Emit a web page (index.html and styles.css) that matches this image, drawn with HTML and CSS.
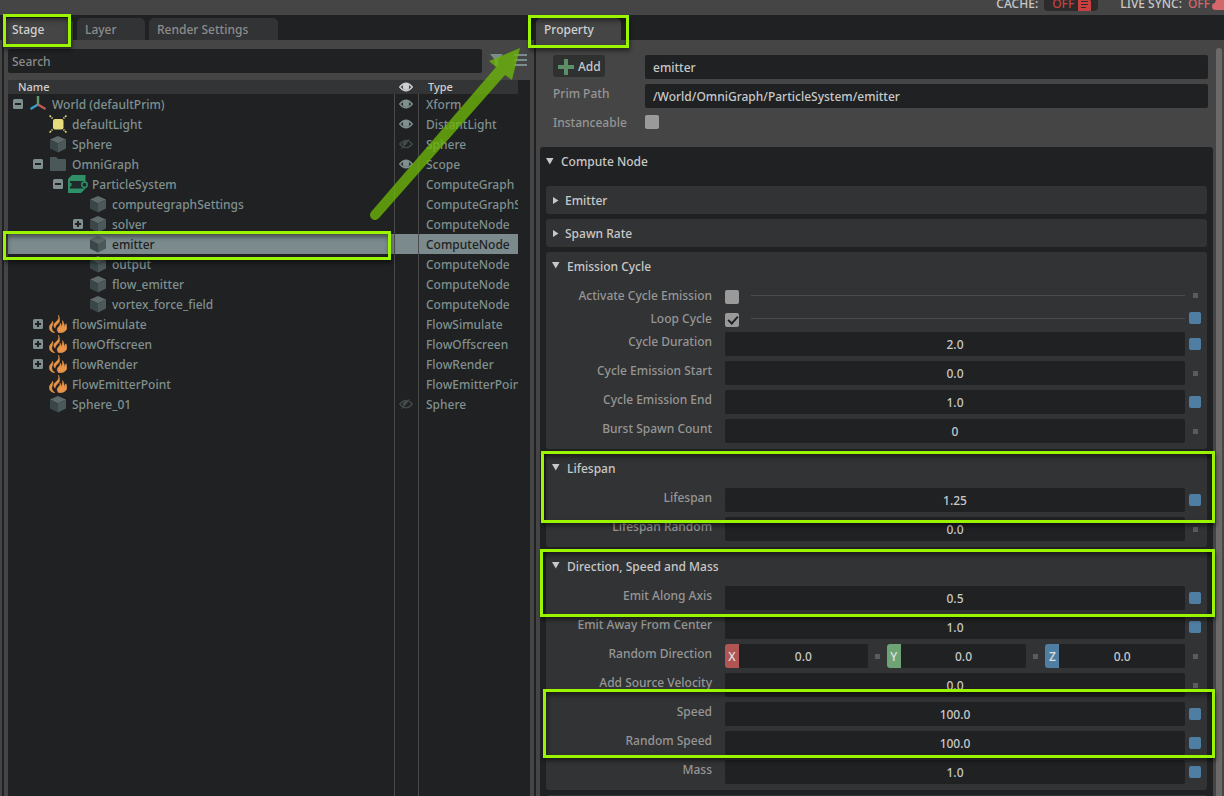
FILE: index.html
```html
<!DOCTYPE html>
<html lang="en">
<head>
<meta charset="utf-8">
<title>Stage and Property</title>
<link rel="stylesheet" href="styles.css">
</head>
<body>
<svg class="defs" aria-hidden="true">
  <symbol id="minus" viewBox="0 0 10 10"><rect width="10" height="10" rx="1.5" fill="#7f8f90"/><rect x="2" y="4" width="6" height="2" fill="#1f2123"/></symbol>
  <symbol id="plus" viewBox="0 0 10 10"><rect width="10" height="10" rx="1.5" fill="#7f8f90"/><path d="M2 4h2V2h2v2h2v2H6v2H4V6H2z" fill="#1f2123"/></symbol>
  <symbol id="axes" viewBox="0 0 18 18"><path d="M9 10V1" stroke="#5f9a68" stroke-width="2.400"/><path d="M9 9.500 1.500 14" stroke="#3aa0c8" stroke-width="2.400"/><path d="M9 9.500l7.500 4.500" stroke="#b85c5c" stroke-width="2.400"/></symbol>
  <symbol id="light" viewBox="0 0 18 18"><rect x="4" y="4" width="10.500" height="10.500" rx="2" fill="#e6dc7c"/><path d="M.5.5l3 3M17.500.5l-3 3M.5 17.500l3-3M17.500 17.500l-3-3" stroke="#e6dc7c" stroke-width="1.500" stroke-dasharray="2.200 .8"/></symbol>
  <symbol id="cube" viewBox="0 0 18 18"><path d="M9 1l8 3.500L9 8.500 1 4.500z" fill="#5f6a6b"/><path d="M1 4.500 9 8.500v9L1 13.500z" fill="#3a4648"/><path d="M17 4.500 9 8.500v9l8-4z" fill="#4c595b"/></symbol>
  <symbol id="folder" viewBox="0 0 18 18"><path d="M1 3q0-1 1-1h5l2 2h7q1 0 1 1v10q0 1-1 1H2q-1 0-1-1z" fill="#4b585a"/></symbol>
  <symbol id="graph" viewBox="0 0 20 18"><path d="M4 0h13.500v6M4 0 0 4v14h13l4.500-4.500V6z" fill="#2f9068"/><path d="M2 6h14v7.500H2v-2.200h1.500V8H2z" fill="#1f2b2b"/><circle cx="16.500" cy="9.700" r="2.700" fill="#1f2b2b" stroke="#2f9068" stroke-width="1.500"/></symbol>
  <symbol id="fire" viewBox="0 0 18 18"><path d="M9.500 0c.8 3.200-.2 5-2.400 6.800C4.600 8.800 4 10.800 6 13.200 6.400 10.500 8.200 9.600 9.800 7.600 11 6 10.800 3.500 9.500 0zM3.500 6C4 8-.2 9.500.3 13.300.7 16 3 17.600 6 17.800 3.200 15.600 2.400 14 3 11.600 3.400 10 4.600 8 3.500 6zM11 8c.6 2-.6 3-2 4.500-1.300 1.500-1 3.500.6 5.300 3.200.2 6.600-.8 8-3.600.8-2-.4-3.400-.3-5.400-1.200.6-1.700 1.600-1.500 3C14.800 11 15.600 8.500 13.400 5.500c.4 2.600-.2 5-1.600 7.200C12.300 11 12.200 9.400 11 8z" fill="#e8954a" stroke="#e8954a" stroke-width=".5"/></symbol>
  <symbol id="eye" viewBox="0 0 14 10"><path d="M.7 5Q7-2.500 13.300 5 7 12.500.7 5z" fill="none" stroke="currentColor" stroke-width="1.300"/><circle cx="7" cy="4.800" r="3.200" fill="currentColor"/></symbol>
  <symbol id="eye-off" viewBox="0 0 14 10"><path d="M.7 5Q7-2.500 13.300 5 7 12.500.7 5z" fill="none" stroke="currentColor" stroke-width="1.200"/><path d="M4 4q2-2.500 4.500-1.500L5.500 7Q4 6 4 4zM2.500 10 10.500 0" fill="currentColor" stroke="currentColor"/></symbol>
  <symbol id="down" viewBox="0 0 8 7"><path d="M0 0h7.500L3.800 6.500z" fill="currentColor"/></symbol>
  <symbol id="right" viewBox="0 0 8 7"><path d="M1 0l5.500 3.500L1 7z" fill="currentColor"/></symbol>
</svg>

<header class="status">
  <span>CACHE:</span>
  <button class="cache" type="button">OFF <svg class="doc" viewBox="0 0 13 14"><path d="M0 0h9l4 4v10H0z" fill="#c8403f"/><path d="M3 4.500h7M3 7.500h7M3 10.500h5" stroke="#2b2b2b"/></svg></button>
  <span>LIVE SYNC:</span>
  <span class="sync-off">OFF</span>
  <svg class="cloud" viewBox="0 0 12 14"><path d="M4 13q-4 0-4-3.500Q0 6 3 6 4 0 10 0h2v13z" fill="#d4676b"/></svg>
</header>

<main class="workspace">
  <section class="stage">
    <nav class="tabs">
      <button class="tab tab-stage active" type="button">Stage</button>
      <button class="tab tab-layer" type="button">Layer</button>
      <button class="tab tab-render" type="button">Render Settings</button>
    </nav>
    <div class="stage-body">
      <div class="searchbar">
        <input class="search" type="text" placeholder="Search" aria-label="Search">
        <button class="tool" type="button" aria-label="Filter"><svg width="13" height="14" viewBox="0 0 13 14"><path d="M0 0h13L8 6v6H5V6z" fill="#7c8b8c"/></svg></button>
        <button class="tool" type="button" aria-label="Options"><svg width="13" height="14" viewBox="0 0 13 14"><path d="M0 1h13M0 6h13M0 11h13" stroke="#7c8b8c" stroke-width="2"/></svg></button>
      </div>
      <div class="tree-pane">
        <table class="tree">
          <thead><tr><th class="name">Name</th><th class="vis"><svg class="eye"><use href="#eye"/></svg></th><th class="type">Type</th></tr></thead>
          <tbody>
            <tr><td><div class="node d0"><svg class="tog"><use href="#minus"/></svg><svg class="ico"><use href="#axes"/></svg>World (defaultPrim)</div></td><td class="vis"><svg class="eye"><use href="#eye"/></svg></td><td class="type">Xform</td></tr>
            <tr><td><div class="node d1"><i class="tog"></i><svg class="ico"><use href="#light"/></svg>defaultLight</div></td><td class="vis"><svg class="eye"><use href="#eye"/></svg></td><td class="type">DistantLight</td></tr>
            <tr><td><div class="node d1"><i class="tog"></i><svg class="ico"><use href="#cube"/></svg>Sphere</div></td><td class="vis off"><svg class="eye"><use href="#eye-off"/></svg></td><td class="type">Sphere</td></tr>
            <tr><td><div class="node d1"><svg class="tog"><use href="#minus"/></svg><svg class="ico"><use href="#folder"/></svg>OmniGraph</div></td><td class="vis"><svg class="eye"><use href="#eye"/></svg></td><td class="type">Scope</td></tr>
            <tr><td><div class="node d2"><svg class="tog"><use href="#minus"/></svg><svg class="ico wide"><use href="#graph"/></svg>ParticleSystem</div></td><td class="vis"></td><td class="type">ComputeGraph</td></tr>
            <tr><td><div class="node d3"><i class="tog"></i><svg class="ico"><use href="#cube"/></svg>computegraphSettings</div></td><td class="vis"></td><td class="type">ComputeGraphSettings</td></tr>
            <tr><td><div class="node d3"><svg class="tog"><use href="#plus"/></svg><svg class="ico"><use href="#cube"/></svg>solver</div></td><td class="vis"></td><td class="type">ComputeNode</td></tr>
            <tr class="selected"><td><div class="node d3"><i class="tog"></i><svg class="ico"><use href="#cube"/></svg>emitter</div></td><td class="vis"></td><td class="type">ComputeNode</td></tr>
            <tr><td><div class="node d3"><i class="tog"></i><svg class="ico"><use href="#cube"/></svg>output</div></td><td class="vis"></td><td class="type">ComputeNode</td></tr>
            <tr><td><div class="node d3"><i class="tog"></i><svg class="ico"><use href="#cube"/></svg>flow_emitter</div></td><td class="vis"></td><td class="type">ComputeNode</td></tr>
            <tr><td><div class="node d3"><i class="tog"></i><svg class="ico"><use href="#cube"/></svg>vortex_force_field</div></td><td class="vis"></td><td class="type">ComputeNode</td></tr>
            <tr><td><div class="node d1"><svg class="tog"><use href="#plus"/></svg><svg class="ico"><use href="#fire"/></svg>flowSimulate</div></td><td class="vis"></td><td class="type">FlowSimulate</td></tr>
            <tr><td><div class="node d1"><svg class="tog"><use href="#plus"/></svg><svg class="ico"><use href="#fire"/></svg>flowOffscreen</div></td><td class="vis"></td><td class="type">FlowOffscreen</td></tr>
            <tr><td><div class="node d1"><svg class="tog"><use href="#plus"/></svg><svg class="ico"><use href="#fire"/></svg>flowRender</div></td><td class="vis"></td><td class="type">FlowRender</td></tr>
            <tr><td><div class="node d1"><i class="tog"></i><svg class="ico"><use href="#fire"/></svg>FlowEmitterPoint</div></td><td class="vis"></td><td class="type">FlowEmitterPoint</td></tr>
            <tr><td><div class="node d1"><i class="tog"></i><svg class="ico"><use href="#cube"/></svg>Sphere_01</div></td><td class="vis off"><svg class="eye"><use href="#eye-off"/></svg></td><td class="type">Sphere</td></tr>
          </tbody>
        </table>
      </div>
    </div>
  </section>

  <section class="property">
    <nav class="tabs"><button class="tab tab-property active" type="button">Property</button></nav>
    <div class="property-body">
      <div class="property-content">
        <div class="prim">
          <button class="add" type="button"><svg width="16" height="16" viewBox="0 0 16 16"><path d="M6 0h4v6h6v4h-6v6H6v-6H0V6h6z" fill="#5c8f68"/></svg>Add</button>
          <input class="field" type="text" value="emitter" aria-label="Prim name">
          <label for="path">Prim Path</label>
          <input class="field" id="path" type="text" value="/World/OmniGraph/ParticleSystem/emitter">
          <label for="inst">Instanceable</label>
          <input class="check" id="inst" type="checkbox">
        </div>

        <div class="frame">
          <button class="frame-title" type="button"><svg class="arrow"><use href="#down"/></svg>Compute Node</button>
          <section class="group closed"><button class="title" type="button"><svg class="arrow"><use href="#right"/></svg>Emitter</button></section>
          <section class="group closed"><button class="title" type="button"><svg class="arrow"><use href="#right"/></svg>Spawn Rate</button></section>

          <section class="group">
            <button class="title" type="button"><svg class="arrow"><use href="#down"/></svg>Emission Cycle</button>
            <div class="row"><label for="ace">Activate Cycle Emission</label><div class="toggle"><input class="check" id="ace" type="checkbox"><hr></div><i class="mark"></i></div>
            <div class="row"><label for="lc">Loop Cycle</label><div class="toggle"><input class="check" id="lc" type="checkbox" checked><hr></div><i class="mark set"></i></div>
            <div class="row"><label for="cd">Cycle Duration</label><input class="field num" id="cd" type="text" value="2.0"><i class="mark set"></i></div>
            <div class="row"><label for="cs">Cycle Emission Start</label><input class="field num" id="cs" type="text" value="0.0"><i class="mark"></i></div>
            <div class="row"><label for="ce">Cycle Emission End</label><input class="field num" id="ce" type="text" value="1.0"><i class="mark set"></i></div>
            <div class="row"><label for="bs">Burst Spawn Count</label><input class="field num" id="bs" type="text" value="0"><i class="mark"></i></div>
          </section>

          <section class="group">
            <button class="title" type="button"><svg class="arrow"><use href="#down"/></svg>Lifespan</button>
            <div class="row"><label for="ls">Lifespan</label><input class="field num" id="ls" type="text" value="1.25"><i class="mark set"></i></div>
            <div class="row"><label for="lr">Lifespan Random</label><input class="field num" id="lr" type="text" value="0.0"><i class="mark"></i></div>
          </section>

          <section class="group">
            <button class="title" type="button"><svg class="arrow"><use href="#down"/></svg>Direction, Speed and Mass</button>
            <div class="row"><label for="ea">Emit Along Axis</label><input class="field num" id="ea" type="text" value="0.5"><i class="mark set"></i></div>
            <div class="row"><label for="ec">Emit Away From Center</label><input class="field num" id="ec" type="text" value="1.0"><i class="mark set"></i></div>
            <div class="row"><label for="rx">Random Direction</label>
              <div class="vector">
                <div class="axis"><label class="x" for="rx">X</label><input class="field num" id="rx" type="text" value="0.0"></div>
                <i class="mark"></i>
                <div class="axis"><label class="y" for="ry">Y</label><input class="field num" id="ry" type="text" value="0.0"></div>
                <i class="mark"></i>
                <div class="axis"><label class="z" for="rz">Z</label><input class="field num" id="rz" type="text" value="0.0"></div>
              </div><i class="mark"></i></div>
            <div class="row"><label for="sv">Add Source Velocity</label><input class="field num" id="sv" type="text" value="0.0"><i class="mark"></i></div>
            <div class="row"><label for="sp">Speed</label><input class="field num" id="sp" type="text" value="100.0"><i class="mark set"></i></div>
            <div class="row"><label for="rs">Random Speed</label><input class="field num" id="rs" type="text" value="100.0"><i class="mark set"></i></div>
            <div class="row"><label for="ms">Mass</label><input class="field num" id="ms" type="text" value="1.0"><i class="mark set"></i></div>
          </section>
          <section class="group closed"></section>
        </div>
      </div>
      <div class="scrollbar"></div>
    </div>
  </section>
</main>

<div class="callout c-stage"></div>
<div class="callout c-property"></div>
<div class="callout c-emitter"></div>
<div class="callout c-lifespan"></div>
<div class="callout c-direction"></div>
<div class="callout c-speed"></div>
<svg class="pointer" width="160" height="180" viewBox="0 0 160 180"><path d="M151 8 120 21l7 6L2 172a5 5 0 0 0 8 6L136 35l7 5z" fill="#6cb40a" fill-opacity=".8"/></svg>
</body>
</html>
```
FILE: styles.css
```css
* { box-sizing: border-box; }

body {
  margin: 0;
  height: 100vh;
  overflow: hidden;
  display: flex;
  flex-direction: column;
  background: #454545;
  color: #c8c8c8;
  font: 500 12px/18px "Noto Sans", "Open Sans", sans-serif;
}

button, input { font: inherit; color: inherit; border: 0; margin: 0; padding: 0; }
button { background: none; text-align: left; }
.defs { position: absolute; width: 0; height: 0; }
svg { display: block; flex: none; }

.status {
  height: 15px;
  flex: none;
  display: flex;
  align-items: flex-end;
  justify-content: flex-end;
  gap: 6px;
  padding-bottom: 4px;
  overflow: hidden;
}
.status > span { line-height: 14px; }
.cache {
  display: flex;
  align-items: flex-end;
  gap: 4px;
  height: 24px;
  padding: 0 7px 0 8px;
  margin-right: 16px;
  border-radius: 4px;
  background: #2b2b2b;
  color: #c8403f;
  line-height: 14px;
}
.doc { width: 13px; height: 14px; }
.sync-off { color: #d4676b; }
.cloud { width: 12px; height: 14px; margin-left: -4px; }

.workspace { flex: 1; min-height: 0; display: flex; }

.tabs { display: flex; gap: 4px; height: 25px; padding-top: 3px; background: #1f2123; flex: none; }
.tab { padding: 2px 0 0 8px; background: #323334; color: #8c8c8c; border-radius: 5px 5px 0 0; }
.tab.active { background: #454545; color: #d0d0d0; }
.tab-stage { width: 69px; padding-left: 8px; }
.tab-layer { width: 68px; }
.tab-render { width: 129px; }
.tab-property { width: 85px; }

.stage { width: 534px; flex: none; display: flex; flex-direction: column; }
.stage .tabs { padding-left: 4px; }
.stage-body {
  flex: 1;
  min-height: 0;
  display: flex;
  flex-direction: column;
  gap: 7px;
  margin-left: 2px;
  padding: 9px 4px 0;
  border-left: 2px solid #1f2123;
}
.searchbar { display: flex; height: 24px; gap: 11px; align-items: center; padding-right: 3px; }
.search { flex: 1; height: 24px; padding: 0 4px; background: #1f2123; border-radius: 2px; }
.search::placeholder { color: #8c8c8c; opacity: 1; }
.tool { width: 13px; }
.tool:first-of-type { margin-left: -3px; }

.tree-pane {
  flex: 1;
  min-height: 0;
  padding-right: 12px;
  overflow: hidden;
  background:
    linear-gradient(#4a4a4a, #4a4a4a) right 135px top / 1px 100% no-repeat,
    linear-gradient(#4a4a4a, #4a4a4a) right 111px top / 1px 100% no-repeat,
    #1f2123;
}
.tree { width: 100%; table-layout: fixed; border-collapse: separate; border-spacing: 0; color: #80908f; }
.tree th, .tree td { padding: 0; height: 20px; line-height: 18px; overflow: hidden; white-space: nowrap; }
.tree th { height: 14px; line-height: 14px; font-size: 11px; font-weight: 500; text-align: left; background: #333435; color: #d0d0d0; }
.tree th.name { padding-left: 10px; }
.tree .vis { width: 24px; padding-left: 4px; }
.tree td.vis { border-left: 1px solid #4a4a4a; }
.tree .type { width: 100px; padding-left: 7px; }
.tree td.type { border-left: 1px solid #4a4a4a; padding-top: 2px; }
.tree th.type { padding-left: 10px; }
.tree td.off { color: #444b4c; }
.eye { width: 14px; height: 10px; }
th .eye { margin-left: 1px; }
.tree .selected { background: #7b8b8d; color: #1f2123; }
.node { display: flex; align-items: center; height: 20px; padding: 2px 0 0 5px; }
.d1 { padding-left: 25px; }
.d2 { padding-left: 45px; }
.d3 { padding-left: 65px; }
.tog { width: 10px; height: 10px; margin: 0 6px 2px 0; }
.ico { width: 18px; height: 18px; margin: 0 5px 2px 0; }
.ico.wide { width: 20px; margin: 0 4px 2px -1px; }

.property { flex: 1; min-width: 0; display: flex; flex-direction: column; border-left: 2px solid #1f2123; }
.property-body { flex: 1; min-height: 0; display: flex; gap: 3px; padding: 8px 2px 0 4px; }
.property-content { flex: 1; min-width: 0; }
.scrollbar { width: 6px; background: #6a6a6a; border-radius: 3px 3px 0 0; }

.prim {
  display: grid;
  grid-template-columns: 92px 1fr;
  grid-template-rows: 24px 24px 18px;
  gap: 5px 0;
  padding: 7px 5px 16px 13px;
}
.prim label { color: #969696; line-height: 20px; }
.prim .check { margin-top: 2px; }
.add {
  display: flex;
  align-items: center;
  gap: 4px;
  width: 52px;
  height: 22px;
  padding: 1px 0 0 5px;
  background: #2f3030;
  border-radius: 3px;
}
.field { width: 100%; min-width: 0; height: 24px; padding: 1px 8px 0; background: #1f2123; border-radius: 2px; }
.num { text-align: center; padding: 0; }
.check { appearance: none; width: 14px; height: 14px; flex: none; background: #9a9a9a; border-radius: 2px; }
.check:checked::before {
  content: "";
  display: block;
  width: 8px;
  height: 4px;
  margin: 3px;
  border: solid #1f2123;
  border-width: 0 0 2px 2px;
  transform: rotate(-48deg);
}

.frame { display: flex; flex-direction: column; gap: 5px; padding: 0 6px; background: #1f2123; border-radius: 3px; }
.frame-title, .title { display: flex; align-items: center; width: 100%; }
.frame-title { height: 30px; margin-bottom: 4px; }
.arrow { width: 8px; height: 7px; margin: 0 7px 2px 0; }
.closed .arrow { margin-right: 5px; }
.group { display: flex; flex-direction: column; gap: 5px; padding: 0 6px 6px; background: #323334; border-radius: 3px; }
.title { height: 29px; }
.group.closed { padding-bottom: 0; min-height: 28px; }
.closed .title { height: 28px; padding-top: 2px; }

.row { display: grid; grid-template-columns: 160px 1fr 12px; column-gap: 4px; }
.row > label { height: 18px; line-height: 20px; text-align: right; color: #969696; }
.row > .field, .row > .toggle, .row > .vector { margin-left: 9px; width: auto; }
.toggle { display: flex; height: 18px; gap: 12px; align-items: flex-end; }
.toggle hr { flex: 1; height: 1px; margin: 0; border: 0; background: #4a4b4c; align-self: center; }
.mark { width: 5px; height: 5px; background: #5a5b5b; place-self: center; flex: none; }
.mark.set { width: 12px; height: 12px; background: #4f7ea3; border-radius: 2px; }
.vector { display: flex; align-items: center; gap: 7px; }
.axis { flex: 1 1 0; display: flex; height: 24px; }
.axis:first-child { flex-basis: 3px; }
.axis label { width: 14px; flex: none; text-align: center; line-height: 26px; border-radius: 3px 0 0 3px; color: #e0e0e0; }
.x { background: #b05454; }
.y { background: #6ea376; }
.z { background: #4f7ea3; }

/* Callouts drawn over the interface */
.callout {
  position: absolute;
  border: 3px solid #9bf500;
  box-shadow: 1px 3px 4px rgba(0, 0, 0, .45), inset 1px 3px 5px rgba(0, 0, 0, .45);
  pointer-events: none;
}
.c-stage { left: 3px; top: 14px; width: 68px; height: 33px; }
.c-property { left: 528px; top: 15px; width: 101px; height: 33px; }
.c-emitter { left: 3px; top: 231px; width: 388px; height: 29px; }
.c-lifespan { left: 541px; right: 9px; top: 451px; height: 72px; }
.c-direction { left: 540px; right: 9px; top: 549px; height: 68px; }
.c-speed { left: 543px; right: 9px; top: 689px; height: 69px; }
.pointer { position: absolute; left: 369px; top: 40px; pointer-events: none; }
```
